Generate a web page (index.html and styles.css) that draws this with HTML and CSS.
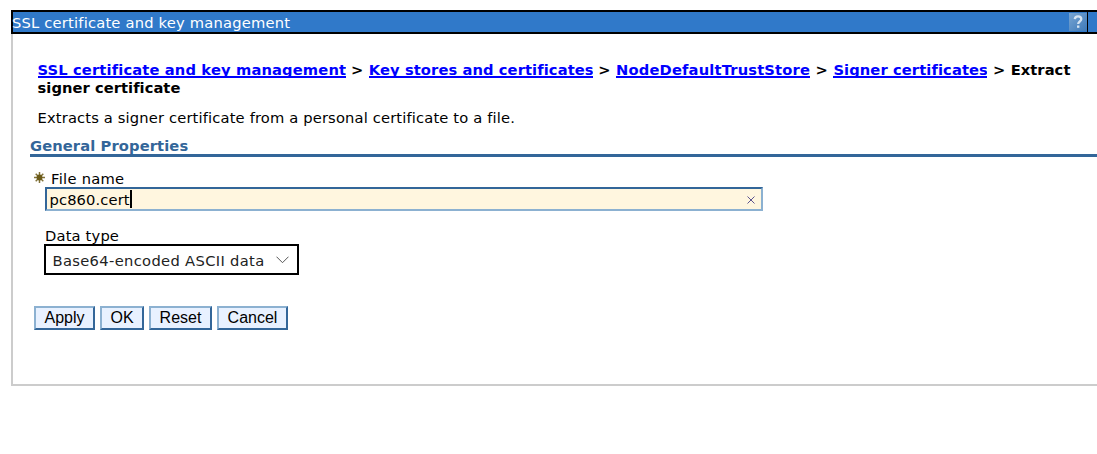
FILE: index.html
```html
<!DOCTYPE html>
<html lang="en">
<head>
<meta charset="utf-8">
<title>SSL certificate and key management</title>
<link rel="stylesheet" href="styles.css">
</head>
<body>
<main class="portlet">
  <header class="titlebar">
    <span class="title">SSL certificate and key management</span>
    <span class="help">
      <svg width="18" height="18" viewBox="0 0 18 18"><defs><linearGradient id="g" x1="0" y1="0" x2="1" y2="1"><stop offset="0" stop-color="#78a5d2"/><stop offset="1" stop-color="#3d79b9"/></linearGradient></defs><rect width="18" height="18" fill="url(#g)"/><path d="M5.8 6.2C6 3.8 7.3 3.4 9 3.4c2 0 3.3 1 3.3 2.7C12.300 8.500 9.200 8.500 9.200 11" fill="none" stroke="#d5e4f2" stroke-width="2.300"/><rect x="8" y="12.500" width="2.400" height="2.300" fill="#d5e4f2"/></svg>
    </span>
  </header>
  <section class="content">
    <nav class="crumbs">
      <div class="crumb-row">
        <a class="crumb c1">SSL certificate and key management</a><span class="sep">&gt;</span>
        <a class="crumb c2">Key stores and certificates</a><span class="sep">&gt;</span>
        <a class="crumb c3">NodeDefaultTrustStore</a><span class="sep">&gt;</span>
        <a class="crumb c4">Signer certificates</a><span class="sep">&gt;</span>
        <span class="here">Extract</span>
      </div>
      <div class="here">signer certificate</div>
    </nav>
    <p class="desc">Extracts a signer certificate from a personal certificate to a file.</p>
    <h2 class="heading">General Properties</h2>
    <div class="label required">
      <svg class="star" width="11" height="11" viewBox="0 0 11 11"><path d="M5.500 0v11M0 5.500h11M1.700 1.700l7.600 7.600M9.300 1.700l-7.600 7.600" stroke="#82733a" stroke-width="1.500"/><circle cx="5.500" cy="5.500" r="2.900" fill="#6b5a18"/></svg>
      <span>File name</span>
    </div>
    <div class="field">
      <span class="value">pc860.cert</span><span class="caret"></span>
      <svg class="clear" width="8" height="8" viewBox="0 0 8 8"><path d="M.5.5l7 7M7.500.5l-7 7" stroke="#5d5490" stroke-width="1"/></svg>
    </div>
    <div class="label type">Data type</div>
    <div class="select">
      <span>Base64-encoded ASCII data</span>
      <svg width="13" height="8" viewBox="0 0 13 8"><path d="M.5.7l6 6 6-6" fill="none" stroke="#555" stroke-width="1"/></svg>
    </div>
    <div class="buttons">
      <button class="b1">Apply</button><button class="b2">OK</button><button class="b3">Reset</button><button class="b4">Cancel</button>
    </div>
  </section>
</main>
</body>
</html>
```

FILE: styles.css
```css
* { box-sizing: border-box; }
body {
  margin: 0;
  background: #fff;
  color: #000;
  font: 14.700px/18px "DejaVu Sans", Verdana, sans-serif;
  overflow: hidden;
  white-space: nowrap;
}
.portlet { margin: 10px 0 0 11px; height: 376px; }
.titlebar {
  display: flex;
  justify-content: space-between;
  height: 24px;
  padding-right: 9px;
  background: #3079c9;
  border: solid #000;
  border-width: 2px 0 2px 2px;
  color: #fff;
}
.title { line-height: 21px; margin-left: -1px; letter-spacing: .2px; }
.help { width: 19px; height: 20px; padding-top: 1px; border-right: 1px solid #000; }
.help svg { display: block; }
.content {
  height: 352px;
  padding-top: 27px;
  border: solid #ccc;
  border-width: 0 0 2px 2px;
}
.crumbs { margin-left: 24.500px; font-weight: bold; }
.crumb-row { display: flex; height: 18px; }
.crumb {
  height: 17px;
  overflow: hidden;
  color: #00f;
  border-bottom: 2px solid #00f;
}
.c1 { width: 308px; letter-spacing: .14px; }
.c2 { width: 224px; letter-spacing: .09px; }
.c3 { width: 194px; letter-spacing: .16px; }
.c4 { width: 154px; letter-spacing: .1px; }
.sep { width: 23.300px; text-align: center; }
.here { letter-spacing: .05px; }
.desc { margin: 12px 0 0 24.500px; letter-spacing: .155px; }
.heading {
  margin: 10px 0 0 17px;
  height: 20px;
  font-size: 14.700px;
  line-height: 18px;
  letter-spacing: .11px;
  color: #336699;
  border-bottom: 3px solid #336699;
}
.label { margin-left: 32px; height: 18px; letter-spacing: .17px; }
.required { display: flex; margin: 12px 0 0 21px; gap: 6px; letter-spacing: .28px; }
.required span { line-height: 19px; }
.star { margin-top: 3px; }
.field {
  display: flex;
  width: 718px;
  height: 24px;
  margin-left: 32px;
  padding-left: 2.500px;
  line-height: 21px;
  background: #fff6df;
  border: 2px solid;
  border-color: #336699 #8cb1d1 #8cb1d1 #336699;
}
.value { width: 80.500px; letter-spacing: .12px; }
.caret { width: 2px; height: 18px; margin-top: 1px; background: #000; }
.clear { margin: 7px 6px 0 auto; }
.type { margin-top: 16px; height: 17px; }
.select {
  display: flex;
  justify-content: space-between;
  align-items: center;
  width: 255px;
  height: 31px;
  margin-left: 31px;
  padding: 1px 8px 0 6.500px;
  letter-spacing: .34px;
  color: #222;
  border: 2px solid #000;
}
.select span { line-height: 20px; padding-top: 1px; }
.buttons { display: flex; gap: 5px; margin: 31px 0 0 21px; }
.buttons button {
  height: 24px;
  padding: 0;
  font: 16px/20px "Liberation Sans", Arial, sans-serif;
  color: #000;
  background: #e8f1ff;
  border: 2px solid;
  border-color: #8cb1d1 #336699 #336699 #8cb1d1;
}
.b1 { width: 61px; }
.b2 { width: 44px; }
.b3 { width: 63px; }
.b4 { width: 71px; }
```
